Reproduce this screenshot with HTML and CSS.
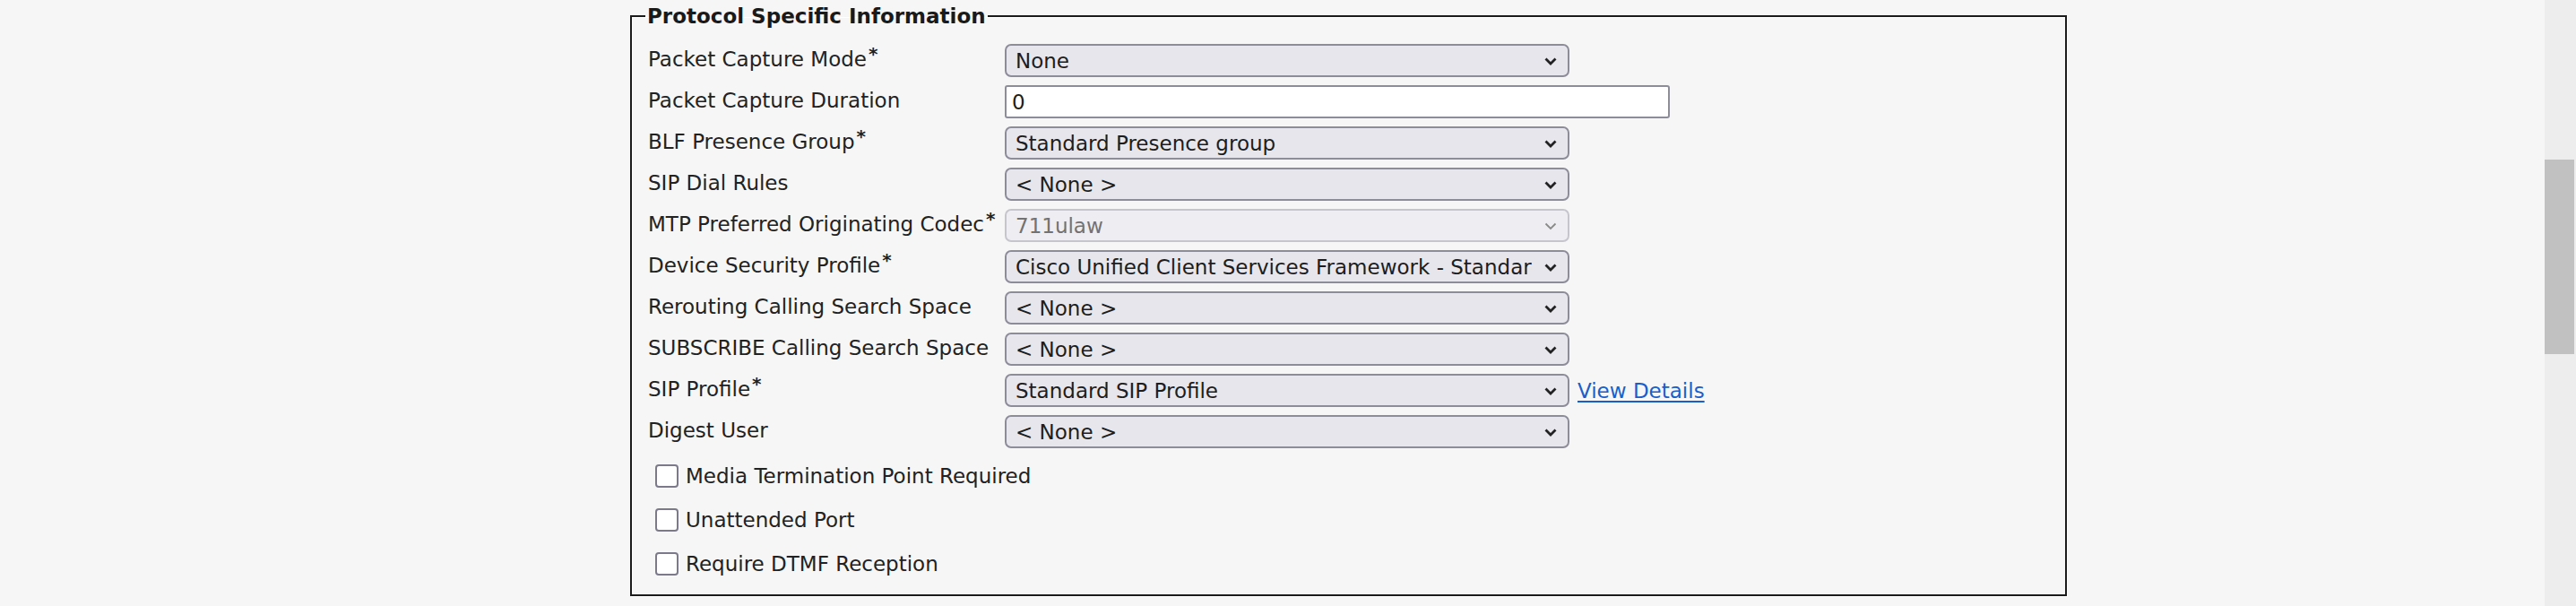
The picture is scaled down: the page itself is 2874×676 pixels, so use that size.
FILE: index.html
```html
<!DOCTYPE html>
<html lang="en">
<head>
    <meta charset="UTF-8">
    <meta name="viewport" content="width=device-width, initial-scale=1.0">
    <title>Phone Configuration</title>
    <link rel="stylesheet" href="styles.css">
</head>
<body>
    <div class="page">
        <main class="content">
            <fieldset class="section">
                <legend>Protocol Specific Information</legend>
                <div class="form-grid">
                    <label class="field-label">Packet Capture Mode<span class="req">*</span></label>
                    <div class="field">
                        <div class="select-wrap">
                            <select><option>None</option></select>
                            <svg class="chev" width="14" height="9" viewBox="0 0 14 9"><path d="M1.5 1.5 L7 7 L12.5 1.5"/></svg>
                        </div>
                    </div>

                    <label class="field-label">Packet Capture Duration</label>
                    <div class="field"><input class="text-input" type="text" value="0"></div>

                    <label class="field-label">BLF Presence Group<span class="req">*</span></label>
                    <div class="field">
                        <div class="select-wrap">
                            <select><option>Standard Presence group</option></select>
                            <svg class="chev" width="14" height="9" viewBox="0 0 14 9"><path d="M1.5 1.5 L7 7 L12.5 1.5"/></svg>
                        </div>
                    </div>

                    <label class="field-label">SIP Dial Rules</label>
                    <div class="field">
                        <div class="select-wrap">
                            <select><option>&lt; None &gt;</option></select>
                            <svg class="chev" width="14" height="9" viewBox="0 0 14 9"><path d="M1.5 1.5 L7 7 L12.5 1.5"/></svg>
                        </div>
                    </div>

                    <label class="field-label">MTP Preferred Originating Codec<span class="req">*</span></label>
                    <div class="field">
                        <div class="select-wrap disabled">
                            <select disabled><option>711ulaw</option></select>
                            <svg class="chev" width="14" height="9" viewBox="0 0 14 9"><path d="M1.5 1.5 L7 7 L12.5 1.5"/></svg>
                        </div>
                    </div>

                    <label class="field-label">Device Security Profile<span class="req">*</span></label>
                    <div class="field">
                        <div class="select-wrap">
                            <select><option>Cisco Unified Client Services Framework - Standard SIP Non-Secure Profile</option></select>
                            <svg class="chev" width="14" height="9" viewBox="0 0 14 9"><path d="M1.5 1.5 L7 7 L12.5 1.5"/></svg>
                        </div>
                    </div>

                    <label class="field-label">Rerouting Calling Search Space</label>
                    <div class="field">
                        <div class="select-wrap">
                            <select><option>&lt; None &gt;</option></select>
                            <svg class="chev" width="14" height="9" viewBox="0 0 14 9"><path d="M1.5 1.5 L7 7 L12.5 1.5"/></svg>
                        </div>
                    </div>

                    <label class="field-label">SUBSCRIBE Calling Search Space</label>
                    <div class="field">
                        <div class="select-wrap">
                            <select><option>&lt; None &gt;</option></select>
                            <svg class="chev" width="14" height="9" viewBox="0 0 14 9"><path d="M1.5 1.5 L7 7 L12.5 1.5"/></svg>
                        </div>
                    </div>

                    <label class="field-label">SIP Profile<span class="req">*</span></label>
                    <div class="field">
                        <div class="select-wrap">
                            <select><option>Standard SIP Profile</option></select>
                            <svg class="chev" width="14" height="9" viewBox="0 0 14 9"><path d="M1.5 1.5 L7 7 L12.5 1.5"/></svg>
                        </div>
                        <a class="details-link" href="#">View Details</a>
                    </div>

                    <label class="field-label">Digest User</label>
                    <div class="field">
                        <div class="select-wrap">
                            <select><option>&lt; None &gt;</option></select>
                            <svg class="chev" width="14" height="9" viewBox="0 0 14 9"><path d="M1.5 1.5 L7 7 L12.5 1.5"/></svg>
                        </div>
                    </div>
                </div>

                <div class="check-list">
                    <label class="check"><input type="checkbox">Media Termination Point Required</label>
                    <label class="check"><input type="checkbox">Unattended Port</label>
                    <label class="check"><input type="checkbox">Require DTMF Reception</label>
                </div>
            </fieldset>
        </main>
        <div class="scrollbar"><div class="scroll-thumb"></div></div>
    </div>
</body>
</html>
```

FILE: styles.css
```css
body {
    margin: 0;
    font-family: "DejaVu Sans", Verdana, sans-serif;
    font-size: 23px;
    color: #222;
    background-color: #f6f6f6;
}

.page {
    display: flex;
    height: 676px;
    overflow: hidden;
}

.content {
    flex: 1;
    padding: 5px 0 0 703px;
}

.section {
    width: 1563px;
    margin: 0;
    padding: 18px 18px 10px 18px;
    border: 2px solid #1b1b1b;
    box-shadow: 1px 1px 0 #fff, inset 1px 1px 0 #fff;
}

.section legend {
    margin-left: -3px;
    padding: 0 2px;
    font-size: 23px;
    font-weight: bold;
    color: #1a1a1a;
}

.form-grid {
    display: grid;
    grid-template-columns: 398px 1fr;
    row-gap: 9px;
}

.field-label {
    padding-top: 4px;
    white-space: nowrap;
}

.req {
    font-size: 20px;
    font-weight: bold;
    line-height: 0;
    vertical-align: 7px;
    margin-left: 2px;
}

.field {
    display: flex;
    align-items: center;
}

.select-wrap {
    position: relative;
    width: 630px;
}

.select-wrap select {
    display: block;
    width: 100%;
    height: 37px;
    padding: 0 40px 0 10px;
    appearance: none;
    -webkit-appearance: none;
    font: inherit;
    color: #1d1d1d;
    background-color: #e7e6ec;
    border: 2px solid #8d8c99;
    border-radius: 7px;
    box-sizing: border-box;
}

.select-wrap .chev {
    position: absolute;
    right: 14px;
    top: 15px;
    fill: none;
    stroke: #222;
    stroke-width: 2.8;
    pointer-events: none;
}

.select-wrap.disabled select {
    color: #727272;
    background-color: #eeedf1;
    border-color: #c6c5cd;
    opacity: 1;
}

.select-wrap.disabled .chev {
    stroke: #8a8a8a;
    stroke-width: 1.8;
}

.text-input {
    width: 742px;
    height: 37px;
    padding: 0 6px;
    font: inherit;
    color: #1d1d1d;
    background-color: #fff;
    border: 2px solid #8d8c99;
    border-radius: 3px;
    box-sizing: border-box;
}

.details-link {
    margin-left: 9px;
    color: #1a5ec9;
    text-decoration: underline;
    text-underline-offset: 3px;
}

.check-list {
    margin-top: 6px;
}

.check {
    display: flex;
    align-items: center;
    height: 49px;
}

.check input {
    appearance: none;
    -webkit-appearance: none;
    width: 26px;
    height: 26px;
    margin: 0 8px 0 8px;
    background-color: #fff;
    border: 2.5px solid #7c7a8a;
    border-radius: 4px;
    box-sizing: border-box;
}

.scrollbar {
    width: 35px;
    background-color: #ededed;
}

.scroll-thumb {
    width: 33px;
    height: 217px;
    margin-top: 178px;
    background-color: #c1c1c1;
}
```
